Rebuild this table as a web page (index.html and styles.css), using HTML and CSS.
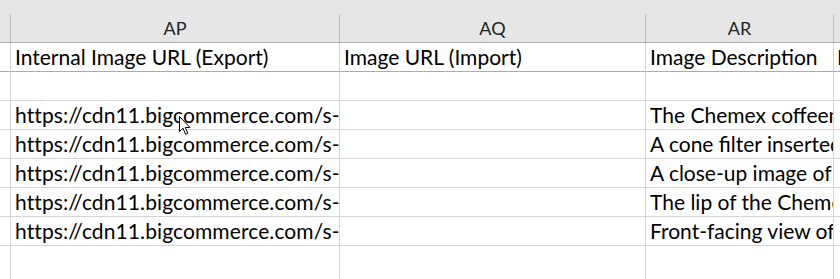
FILE: index.html
```html
<!DOCTYPE html>
<html>
<head>
<meta charset="utf-8">
<link rel="stylesheet" href="styles.css">
</head>
<body>
<div class="sheet">
  <div class="c hd rh"></div>
  <div class="c hd">AP</div>
  <div class="c hd">AQ</div>
  <div class="c hd">AR</div>
  <div class="c hd last"></div>

  <div class="c rh frz"></div>
  <div class="c frz">Internal Image URL (Export)</div>
  <div class="c frz">Image URL (Import)</div>
  <div class="c frz">Image Description</div>
  <div class="c frz last">I</div>

  <div class="c rh"></div><div class="c"></div><div class="c"></div><div class="c"></div><div class="c last"></div>

  <div class="c rh"></div>
  <div class="c url">https://cdn11.bigcommerce.com/s-</div>
  <div class="c"></div>
  <div class="c">The Chemex coffeem</div>
  <div class="c last"></div>

  <div class="c rh"></div>
  <div class="c url">https://cdn11.bigcommerce.com/s-</div>
  <div class="c"></div>
  <div class="c">A cone filter inserted</div>
  <div class="c last"></div>

  <div class="c rh"></div>
  <div class="c url">https://cdn11.bigcommerce.com/s-</div>
  <div class="c"></div>
  <div class="c">A close-up image of</div>
  <div class="c last"></div>

  <div class="c rh"></div>
  <div class="c url">https://cdn11.bigcommerce.com/s-</div>
  <div class="c"></div>
  <div class="c">The lip of the Chemex</div>
  <div class="c last"></div>

  <div class="c rh"></div>
  <div class="c url">https://cdn11.bigcommerce.com/s-</div>
  <div class="c"></div>
  <div class="c">Front-facing view of</div>
  <div class="c last"></div>

  <div class="c rh end"></div><div class="c end"></div><div class="c end"></div><div class="c end"></div><div class="c last end"></div>
</div>
<svg class="cursor" width="13" height="20" viewBox="0 0 13 20">
  <path d="M0.5 0.5 L0.5 15.5 L4 12.2 L6.6 18.3 L8.8 17.4 L6.3 11.5 L11 11.5 Z" fill="#fff" stroke="#000" stroke-width="1" stroke-linejoin="miter"/>
</svg>
</body>
</html>
```

FILE: styles.css
```css
html, body {
  margin: 0;
  padding: 0;
  background: #ffffff;
}

body {
  width: 840px;
  height: 279px;
  overflow: hidden;
  position: relative;
}

.sheet {
  display: grid;
  grid-template-columns: 11px 329px 306px 188px 1fr;
  grid-template-rows: 43px repeat(7, 29px) 1fr;
  height: 279px;
  font-family: "Lato", "Liberation Sans", sans-serif;
  font-size: 21px;
  color: #000;
}

.c {
  box-sizing: border-box;
  border-right: 1px solid #d4d4d4;
  border-bottom: 1px solid #d4d4d4;
  padding: 0 4px;
  white-space: nowrap;
  overflow: hidden;
  line-height: 28px;
}

.c.url {
  letter-spacing: 0.1px;
}

.c.last {
  border-right: none;
  padding-left: 3px;
}

.c.rh {
  padding: 0;
}

.c.end {
  border-bottom: none;
}

.c.frz {
  border-bottom-color: #ababab;
}

.hd {
  background-color: #e6e6e6;
  background-image: linear-gradient(#bdbdbd, #bdbdbd);
  background-repeat: no-repeat;
  background-position: right bottom;
  background-size: 1px 28px;
  border-right: none;
  border-bottom: 1px solid #ababab;
  padding: 14px 1px 0 0;
  text-align: center;
  font-size: 18px;
  color: #222;
}

.hd.last {
  background-image: none;
}

.cursor {
  position: absolute;
  left: 179px;
  top: 116px;
}
```
